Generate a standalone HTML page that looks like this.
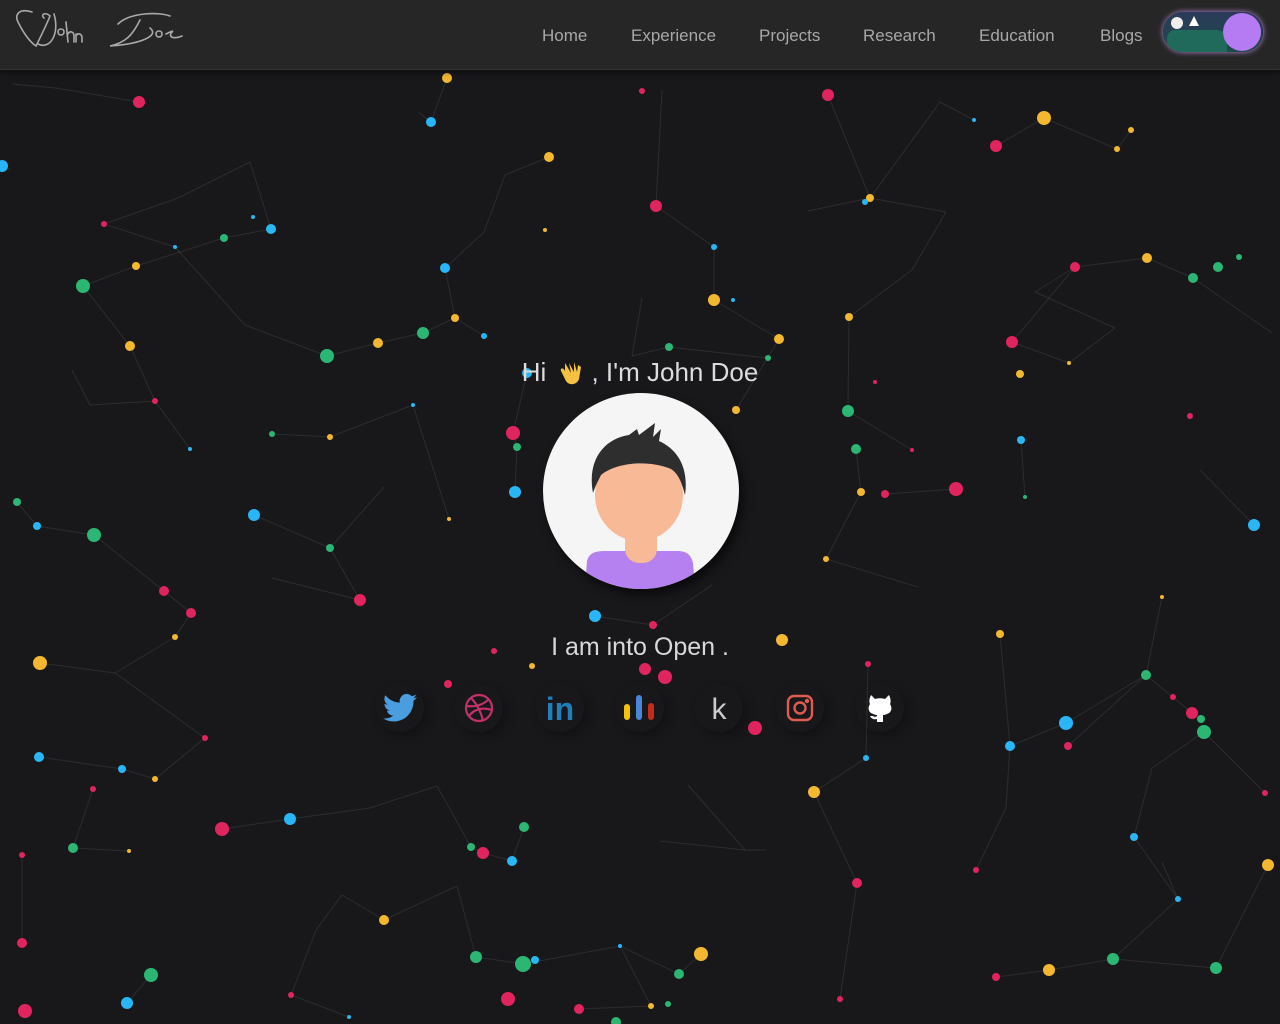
<!DOCTYPE html>
<html><head><meta charset="utf-8"><style>
*{margin:0;padding:0;box-sizing:border-box}
body{width:1280px;height:1024px;overflow:hidden;background:#18181b;font-family:"Liberation Sans",sans-serif;position:relative}
#bg{position:absolute;left:0;top:0}
header{position:absolute;left:0;top:0;width:1280px;height:70px;background:#262626;border-bottom:1px solid #333;box-shadow:0 2px 6px rgba(0,0,0,.5)}
.nav{position:absolute;top:26px;color:#a8a8a8;font-size:17px}
.toggle{position:absolute;left:1163px;top:12px;width:100px;height:40px;border-radius:20px;background:linear-gradient(180deg,#2a3a5a,#1f4a48);box-shadow:0 0 6px #b98ad8;overflow:hidden}
.knob{position:absolute;right:2px;top:1px;width:38px;height:38px;border-radius:50%;background:#b57bf2}
.hi{position:absolute;left:0;width:1280px;top:357px;text-align:center;color:#dcdcdc;font-size:26px}
.avatar{position:absolute;left:543px;top:393px;width:196px;height:196px;border-radius:50%;background:#f5f5f5;overflow:hidden;box-shadow:4px 6px 10px rgba(0,0,0,.6)}
.sub{position:absolute;left:0;width:1280px;top:633px;text-align:center;color:#d8d8d8;font-size:25px;font-weight:300}
.ic{position:absolute;top:684px;width:48px;height:48px;border-radius:50%;box-shadow:4px 4px 10px rgba(0,0,0,.3);display:flex;align-items:center;justify-content:center}
</style></head><body>
<svg id="bg" width="1280" height="1024">
<g stroke="rgba(255,255,255,0.09)" stroke-width="1">
<line x1="83" y1="286" x2="136" y2="266"/><line x1="136" y1="266" x2="224" y2="238"/><line x1="224" y1="238" x2="271" y2="229"/><line x1="83" y1="286" x2="130" y2="346"/><line x1="130" y1="346" x2="155" y2="401"/><line x1="155" y1="401" x2="190" y2="449"/><line x1="327" y1="356" x2="378" y2="343"/><line x1="378" y1="343" x2="423" y2="333"/><line x1="423" y1="333" x2="455" y2="318"/><line x1="445" y1="268" x2="455" y2="318"/><line x1="455" y1="318" x2="484" y2="336"/><line x1="431" y1="122" x2="447" y2="78"/><line x1="549" y1="157" x2="505" y2="175"/><line x1="656" y1="206" x2="714" y2="247"/><line x1="714" y1="247" x2="714" y2="300"/><line x1="714" y1="300" x2="779" y2="339"/><line x1="849" y1="317" x2="848" y2="411"/><line x1="870" y1="198" x2="946" y2="212"/><line x1="828" y1="95" x2="870" y2="198"/><line x1="996" y1="146" x2="1044" y2="118"/><line x1="1075" y1="267" x2="1012" y2="342"/><line x1="1012" y1="342" x2="1069" y2="363"/><line x1="1075" y1="267" x2="1147" y2="258"/><line x1="1147" y1="258" x2="1193" y2="278"/><line x1="956" y1="489" x2="885" y2="494"/><line x1="861" y1="492" x2="826" y2="559"/><line x1="826" y1="559" x2="918" y2="587"/><line x1="17" y1="502" x2="37" y2="526"/><line x1="37" y1="526" x2="94" y2="535"/><line x1="254" y1="515" x2="330" y2="548"/><line x1="330" y1="548" x2="360" y2="600"/><line x1="164" y1="591" x2="191" y2="613"/><line x1="191" y1="613" x2="175" y2="637"/><line x1="39" y1="757" x2="122" y2="769"/><line x1="122" y1="769" x2="155" y2="779"/><line x1="93" y1="789" x2="73" y2="848"/><line x1="73" y1="848" x2="129" y2="851"/><line x1="222" y1="829" x2="290" y2="819"/><line x1="471" y1="847" x2="483" y2="853"/><line x1="483" y1="853" x2="512" y2="861"/><line x1="524" y1="827" x2="512" y2="861"/><line x1="476" y1="957" x2="523" y2="964"/><line x1="523" y1="964" x2="620" y2="946"/><line x1="620" y1="946" x2="679" y2="974"/><line x1="579" y1="1009" x2="651" y2="1006"/><line x1="701" y1="954" x2="679" y2="974"/><line x1="814" y1="792" x2="857" y2="883"/><line x1="1010" y1="746" x2="1066" y2="723"/><line x1="1066" y1="723" x2="1146" y2="675"/><line x1="1146" y1="675" x2="1192" y2="713"/><line x1="1204" y1="732" x2="1265" y2="793"/><line x1="1134" y1="837" x2="1178" y2="899"/><line x1="1049" y1="970" x2="1113" y2="959"/><line x1="1113" y1="959" x2="1216" y2="968"/><line x1="996" y1="977" x2="1049" y2="970"/><line x1="22" y1="943" x2="22" y2="855"/><line x1="291" y1="995" x2="349" y2="1017"/><line x1="384" y1="920" x2="342" y2="895"/><line x1="595" y1="616" x2="653" y2="625"/><line x1="653" y1="625" x2="712" y2="585"/><line x1="513" y1="433" x2="517" y2="447"/><line x1="517" y1="447" x2="515" y2="492"/><line x1="513" y1="433" x2="527" y2="373"/><line x1="768" y1="358" x2="669" y2="347"/><line x1="1021" y1="440" x2="1025" y2="497"/><line x1="1254" y1="525" x2="1200" y2="470"/><line x1="866" y1="758" x2="868" y2="664"/><line x1="139" y1="102" x2="56" y2="88"/><line x1="12" y1="84" x2="56" y2="88"/>
<line x1="104" y1="224" x2="178" y2="198"/><line x1="178" y1="198" x2="250" y2="162"/><line x1="250" y1="162" x2="271" y2="229"/><line x1="104" y1="224" x2="175" y2="247"/><line x1="175" y1="247" x2="245" y2="325"/><line x1="245" y1="325" x2="327" y2="356"/><line x1="90" y1="405" x2="155" y2="401"/><line x1="72" y1="370" x2="90" y2="405"/><line x1="272" y1="434" x2="330" y2="437"/><line x1="330" y1="437" x2="413" y2="405"/><line x1="413" y1="405" x2="449" y2="519"/><line x1="384" y1="487" x2="330" y2="548"/><line x1="272" y1="578" x2="360" y2="600"/><line x1="94" y1="535" x2="164" y2="591"/><line x1="40" y1="663" x2="115" y2="673"/><line x1="115" y1="673" x2="175" y2="637"/><line x1="115" y1="673" x2="205" y2="738"/><line x1="205" y1="738" x2="155" y2="779"/><line x1="290" y1="819" x2="370" y2="808"/><line x1="370" y1="808" x2="437" y2="786"/><line x1="437" y1="786" x2="471" y2="847"/><line x1="342" y1="895" x2="316" y2="930"/><line x1="316" y1="930" x2="291" y2="995"/><line x1="151" y1="975" x2="127" y2="1003"/><line x1="457" y1="886" x2="476" y2="957"/><line x1="384" y1="920" x2="457" y2="886"/><line x1="620" y1="946" x2="651" y2="1006"/><line x1="688" y1="785" x2="745" y2="850"/><line x1="745" y1="850" x2="766" y2="850"/><line x1="660" y1="841" x2="745" y2="850"/><line x1="814" y1="792" x2="866" y2="758"/><line x1="857" y1="883" x2="840" y2="999"/><line x1="976" y1="870" x2="1006" y2="808"/><line x1="1006" y1="808" x2="1010" y2="746"/><line x1="1000" y1="634" x2="1010" y2="746"/><line x1="1162" y1="597" x2="1146" y2="675"/><line x1="1152" y1="768" x2="1204" y2="732"/><line x1="1152" y1="768" x2="1134" y2="837"/><line x1="1162" y1="862" x2="1178" y2="899"/><line x1="1178" y1="899" x2="1113" y2="959"/><line x1="1268" y1="865" x2="1216" y2="968"/><line x1="1035" y1="292" x2="1075" y2="267"/><line x1="1035" y1="292" x2="1115" y2="328"/><line x1="1115" y1="328" x2="1069" y2="363"/><line x1="1193" y1="278" x2="1272" y2="333"/><line x1="912" y1="270" x2="946" y2="212"/><line x1="912" y1="270" x2="849" y2="317"/><line x1="808" y1="211" x2="870" y2="198"/><line x1="940" y1="102" x2="870" y2="198"/><line x1="940" y1="102" x2="974" y2="120"/><line x1="848" y1="411" x2="912" y2="450"/><line x1="856" y1="449" x2="861" y2="492"/><line x1="632" y1="356" x2="669" y2="347"/><line x1="632" y1="356" x2="642" y2="298"/><line x1="662" y1="90" x2="656" y2="206"/><line x1="505" y1="175" x2="484" y2="232"/><line x1="484" y1="232" x2="445" y2="268"/><line x1="418" y1="112" x2="431" y2="122"/><line x1="1117" y1="149" x2="1131" y2="130"/><line x1="1117" y1="149" x2="1044" y2="118"/><line x1="736" y1="410" x2="779" y2="339"/><line x1="1146" y1="675" x2="1068" y2="746"/></g>
<g fill="#e0245e"><circle cx="139" cy="102" r="6"/><circle cx="828" cy="95" r="6"/><circle cx="996" cy="146" r="6"/><circle cx="656" cy="206" r="6"/><circle cx="1075" cy="267" r="5"/><circle cx="1012" cy="342" r="6"/><circle cx="513" cy="433" r="7"/><circle cx="956" cy="489" r="7"/><circle cx="885" cy="494" r="4"/><circle cx="164" cy="591" r="5"/><circle cx="191" cy="613" r="5"/><circle cx="360" cy="600" r="6"/><circle cx="653" cy="625" r="4"/><circle cx="645" cy="669" r="6"/><circle cx="665" cy="677" r="7"/><circle cx="755" cy="728" r="7"/><circle cx="1192" cy="713" r="6"/><circle cx="1068" cy="746" r="4"/><circle cx="222" cy="829" r="7"/><circle cx="483" cy="853" r="6"/><circle cx="857" cy="883" r="5"/><circle cx="22" cy="943" r="5"/><circle cx="25" cy="1011" r="7"/><circle cx="508" cy="999" r="7"/><circle cx="579" cy="1009" r="5"/><circle cx="996" cy="977" r="4"/><circle cx="1190" cy="416" r="3"/><circle cx="155" cy="401" r="3"/><circle cx="104" cy="224" r="3"/><circle cx="642" cy="91" r="3"/><circle cx="448" cy="684" r="4"/><circle cx="494" cy="651" r="3"/><circle cx="205" cy="738" r="3"/><circle cx="93" cy="789" r="3"/><circle cx="22" cy="855" r="3"/><circle cx="291" cy="995" r="3"/><circle cx="840" cy="999" r="3"/><circle cx="976" cy="870" r="3"/><circle cx="1173" cy="697" r="3"/><circle cx="1265" cy="793" r="3"/><circle cx="912" cy="450" r="2"/><circle cx="875" cy="382" r="2"/><circle cx="868" cy="664" r="3"/></g>
<g fill="#f4b730"><circle cx="447" cy="78" r="5"/><circle cx="549" cy="157" r="5"/><circle cx="1044" cy="118" r="7"/><circle cx="1117" cy="149" r="3"/><circle cx="1131" cy="130" r="3"/><circle cx="870" cy="198" r="4"/><circle cx="714" cy="300" r="6"/><circle cx="779" cy="339" r="5"/><circle cx="849" cy="317" r="4"/><circle cx="736" cy="410" r="4"/><circle cx="1147" cy="258" r="5"/><circle cx="1020" cy="374" r="4"/><circle cx="136" cy="266" r="4"/><circle cx="130" cy="346" r="5"/><circle cx="378" cy="343" r="5"/><circle cx="455" cy="318" r="4"/><circle cx="330" cy="437" r="3"/><circle cx="40" cy="663" r="7"/><circle cx="175" cy="637" r="3"/><circle cx="782" cy="640" r="6"/><circle cx="861" cy="492" r="4"/><circle cx="826" cy="559" r="3"/><circle cx="1000" cy="634" r="4"/><circle cx="814" cy="792" r="6"/><circle cx="384" cy="920" r="5"/><circle cx="701" cy="954" r="7"/><circle cx="651" cy="1006" r="3"/><circle cx="1049" cy="970" r="6"/><circle cx="1268" cy="865" r="6"/><circle cx="155" cy="779" r="3"/><circle cx="449" cy="519" r="2"/><circle cx="1162" cy="597" r="2"/><circle cx="532" cy="666" r="3"/><circle cx="1069" cy="363" r="2"/><circle cx="545" cy="230" r="2"/><circle cx="129" cy="851" r="2"/></g>
<g fill="#2bb673"><circle cx="83" cy="286" r="7"/><circle cx="224" cy="238" r="4"/><circle cx="327" cy="356" r="7"/><circle cx="423" cy="333" r="6"/><circle cx="669" cy="347" r="4"/><circle cx="768" cy="358" r="3"/><circle cx="848" cy="411" r="6"/><circle cx="856" cy="449" r="5"/><circle cx="517" cy="447" r="4"/><circle cx="272" cy="434" r="3"/><circle cx="17" cy="502" r="4"/><circle cx="94" cy="535" r="7"/><circle cx="330" cy="548" r="4"/><circle cx="1146" cy="675" r="5"/><circle cx="1201" cy="719" r="4"/><circle cx="1204" cy="732" r="7"/><circle cx="1193" cy="278" r="5"/><circle cx="1218" cy="267" r="5"/><circle cx="1239" cy="257" r="3"/><circle cx="73" cy="848" r="5"/><circle cx="471" cy="847" r="4"/><circle cx="524" cy="827" r="5"/><circle cx="523" cy="964" r="8"/><circle cx="476" cy="957" r="6"/><circle cx="679" cy="974" r="5"/><circle cx="668" cy="1004" r="3"/><circle cx="151" cy="975" r="7"/><circle cx="1113" cy="959" r="6"/><circle cx="1216" cy="968" r="6"/><circle cx="616" cy="1022" r="5"/><circle cx="1025" cy="497" r="2"/></g>
<g fill="#29b6f6"><circle cx="2" cy="166" r="6"/><circle cx="431" cy="122" r="5"/><circle cx="445" cy="268" r="5"/><circle cx="484" cy="336" r="3"/><circle cx="714" cy="247" r="3"/><circle cx="733" cy="300" r="2"/><circle cx="865" cy="202" r="3"/><circle cx="974" cy="120" r="2"/><circle cx="413" cy="405" r="2"/><circle cx="190" cy="449" r="2"/><circle cx="515" cy="492" r="6"/><circle cx="254" cy="515" r="6"/><circle cx="37" cy="526" r="4"/><circle cx="595" cy="616" r="6"/><circle cx="1254" cy="525" r="6"/><circle cx="1021" cy="440" r="4"/><circle cx="1066" cy="723" r="7"/><circle cx="1010" cy="746" r="5"/><circle cx="866" cy="758" r="3"/><circle cx="39" cy="757" r="5"/><circle cx="122" cy="769" r="4"/><circle cx="290" cy="819" r="6"/><circle cx="512" cy="861" r="5"/><circle cx="1134" cy="837" r="4"/><circle cx="1178" cy="899" r="3"/><circle cx="535" cy="960" r="4"/><circle cx="620" cy="946" r="2"/><circle cx="127" cy="1003" r="6"/><circle cx="349" cy="1017" r="2"/><circle cx="253" cy="217" r="2"/><circle cx="271" cy="229" r="5"/><circle cx="175" cy="247" r="2"/><circle cx="527" cy="373" r="5"/></g>
</svg>
<header>
<svg width="200" height="60" style="position:absolute;left:10px;top:4px" fill="none" stroke="#a9a9a9" stroke-width="1.6" stroke-linecap="round">
<path d="M22 8 C10 4 4 10 8 18 C14 30 20 38 26 42 C30 34 36 22 40 12 C36 8 30 10 34 14"/>
<path d="M44 10 C50 30 40 46 28 40"/>
<path d="M48 28 c0 -4 6 -4 6 0 c0 4 -6 4 -6 0 M56 18 L58 38 M58 30 c2 -4 6 -2 6 2 l0 6 M66 30 l0 8 M66 32 c2 -4 6 -2 6 2 l0 4"/>
<path d="M108 20 C120 8 150 8 160 12 M130 16 C124 28 118 38 100 42 C130 40 150 32 140 24"/>
<path d="M146 30 c0 -4 6 -4 6 0 c0 4 -6 4 -6 0 M156 30 c4 -2 8 -4 6 -2 c-4 4 0 8 10 4"/>
</svg>
<div class="nav" style="left:542px">Home</div>
<div class="nav" style="left:631px">Experience</div>
<div class="nav" style="left:759px">Projects</div>
<div class="nav" style="left:863px">Research</div>
<div class="nav" style="left:979px">Education</div>
<div class="nav" style="left:1100px">Blogs</div>
<div class="toggle">
<div style="position:absolute;left:8px;top:5px;width:12px;height:12px;border-radius:50%;background:#eee"></div>
<div style="position:absolute;left:26px;top:4px;width:0;height:0;border-left:5px solid transparent;border-right:5px solid transparent;border-bottom:10px solid #fff"></div>
<div style="position:absolute;left:4px;top:18px;width:60px;height:24px;background:#1f6a5a;border-radius:8px 10px 0 0"></div>
<div class="knob"></div></div>
</header>
<div class="hi">Hi <svg width="30" height="30" viewBox="0 0 30 30" style="vertical-align:-6px;margin:0 4px"><path d="M8 6 L14 16 L12 6 L17 15 L17 5 L20 15 L21 8 L24 10 L22 22 C20 28 12 29 9 24 L4 14 C3 11 6 10 8 14 Z" fill="#f6c242"/></svg>, I'm John Doe</div>
<div class="avatar"><svg width="196" height="196" viewBox="0 0 196 196">
<path d="M42 196 L44 168 C46 160 52 158 62 158 L134 158 C144 158 148 162 150 170 L152 196 Z" fill="#b580f0"/>
<rect x="82" y="130" width="32" height="40" rx="14" fill="#f8b996"/>
<ellipse cx="96" cy="102" rx="44" ry="46" fill="#f8b996"/>
<path d="M50 100 C44 68 60 46 86 42 L94 36 L96 42 L112 30 L110 44 L118 36 L116 48 C134 56 146 74 142 102 C138 86 134 80 128 76 C104 66 72 70 58 82 C54 90 52 94 50 100 Z" fill="#2e2e2e"/>
</svg></div>
<div class="sub">I am into Open .</div>
<div class="ic" style="left:376px"><svg width="34" height="30" viewBox="0 0 24 20"><path d="M24 2.4c-.9.4-1.8.6-2.8.8 1-.6 1.8-1.6 2.2-2.7-1 .6-2 1-3.1 1.2A4.9 4.9 0 0 0 11.9 6.2 14 14 0 0 1 1.7 1a4.9 4.9 0 0 0 1.5 6.6c-.8 0-1.600-.2-2.2-.6 0 2.4 1.7 4.4 3.9 4.8-.7.2-1.5.2-2.2.1.6 2 2.4 3.4 4.6 3.4A9.9 9.9 0 0 1 0 17.3 14 14 0 0 0 7.5 19.5c9.1 0 14-7.5 14-14v-.6c1-.7 1.8-1.6 2.5-2.5z" fill="#4a9ee0"/></svg></div>
<div class="ic" style="left:455px"><svg width="32" height="32" viewBox="0 0 32 32" fill="none" stroke="#c0306a" stroke-width="2.2"><circle cx="16" cy="16" r="13"/><path d="M8 6c6 6 10 14 12 23M4 14c8 1 16-1 22-7M6 24c5-7 14-9 23-6"/></svg></div>
<div class="ic" style="left:536px"><span style="color:#1f7fbb;font-weight:bold;font-size:32px;font-family:'Liberation Sans',sans-serif;margin-top:2px">in</span></div>
<div class="ic" style="left:616px"><svg width="34" height="28" viewBox="0 0 34 28"><rect x="1" y="10" width="6" height="16" rx="3" fill="#f4c20d"/><rect x="13" y="1" width="6" height="25" rx="3" fill="#4a86d8"/><rect x="25" y="9" width="6" height="17" rx="3" fill="#c42b1c"/></svg></div>
<div class="ic" style="left:695px"><span style="color:#ccc;font-size:30px;margin-top:4px">k</span></div>
<div class="ic" style="left:776px"><svg width="28" height="28" viewBox="0 0 28 28" fill="none" stroke="#e05a4f" stroke-width="2.4"><rect x="2" y="2" width="24" height="24" rx="6"/><circle cx="14" cy="14" r="5.5"/><circle cx="21" cy="7" r="1" fill="#e05a4f"/></svg></div>
<div class="ic" style="left:856px"><svg width="26" height="30" viewBox="0 0 26 30"><path d="M4 2 L8 6 C11 5 15 5 18 6 L22 2 C24 6 24 9 23 11 C25 14 25 18 22 20 C20 21 18 22 16 22 L16 29 L10 29 L10 26 C6 27 4 25 3 23 L6 23 C7 24 9 24 10 23 L10 22 C8 22 6 21 4 20 C1 18 1 14 3 11 C2 9 2 6 4 2 Z" fill="#fff"/></svg></div>
</body></html>
